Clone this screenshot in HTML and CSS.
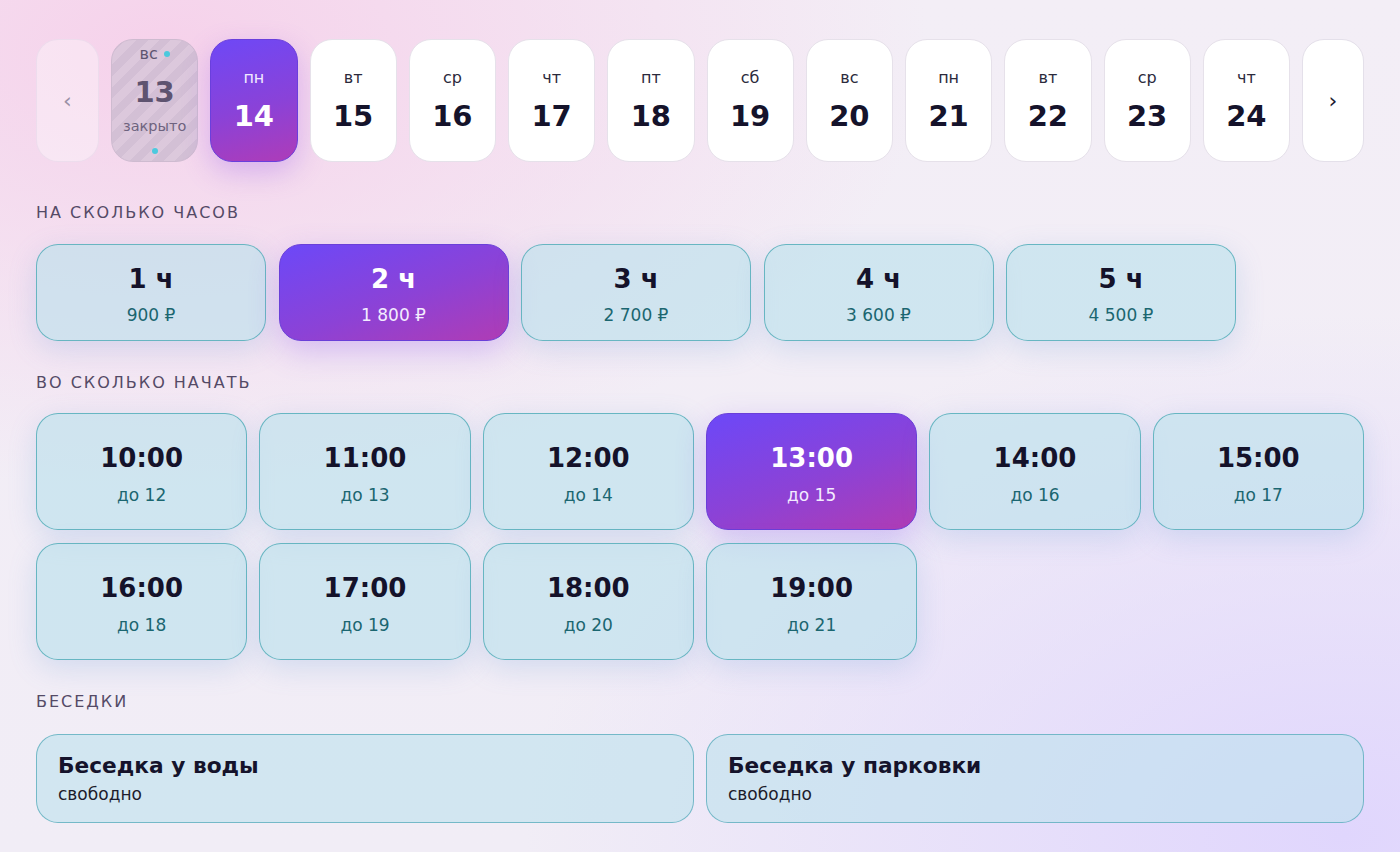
FILE: index.html
```html
<!DOCTYPE html>
<html lang="ru">
<head>
<meta charset="utf-8">
<title>Бронирование</title>
<link rel="stylesheet" href="styles.css">
</head>
<body>
<main class="page">
  <div class="dates">
    <button class="nav nav-prev">‹</button>
    <div class="day day-closed">
      <span class="dow-row"><span class="dow">вс</span><span class="dot"></span></span>
      <span class="num">13</span>
      <span class="closed-note">закрыто</span>
      <span class="dot dot-bottom"></span>
    </div>
    <div class="day day-active"><span class="dow">пн</span><span class="num">14</span></div>
    <div class="day"><span class="dow">вт</span><span class="num">15</span></div>
    <div class="day"><span class="dow">ср</span><span class="num">16</span></div>
    <div class="day"><span class="dow">чт</span><span class="num">17</span></div>
    <div class="day"><span class="dow">пт</span><span class="num">18</span></div>
    <div class="day"><span class="dow">сб</span><span class="num">19</span></div>
    <div class="day"><span class="dow">вс</span><span class="num">20</span></div>
    <div class="day"><span class="dow">пн</span><span class="num">21</span></div>
    <div class="day"><span class="dow">вт</span><span class="num">22</span></div>
    <div class="day"><span class="dow">ср</span><span class="num">23</span></div>
    <div class="day"><span class="dow">чт</span><span class="num">24</span></div>
    <button class="nav nav-next">›</button>
  </div>

  <h2 class="label label-hours">НА СКОЛЬКО ЧАСОВ</h2>
  <div class="hours">
    <div class="opt"><span class="opt-title">1 ч</span><span class="opt-sub">900 ₽</span></div>
    <div class="opt opt-active"><span class="opt-title">2 ч</span><span class="opt-sub">1 800 ₽</span></div>
    <div class="opt"><span class="opt-title">3 ч</span><span class="opt-sub">2 700 ₽</span></div>
    <div class="opt"><span class="opt-title">4 ч</span><span class="opt-sub">3 600 ₽</span></div>
    <div class="opt"><span class="opt-title">5 ч</span><span class="opt-sub">4 500 ₽</span></div>
  </div>

  <h2 class="label label-times">ВО СКОЛЬКО НАЧАТЬ</h2>
  <div class="times">
    <div class="opt opt-time"><span class="opt-title">10:00</span><span class="opt-sub">до 12</span></div>
    <div class="opt opt-time"><span class="opt-title">11:00</span><span class="opt-sub">до 13</span></div>
    <div class="opt opt-time"><span class="opt-title">12:00</span><span class="opt-sub">до 14</span></div>
    <div class="opt opt-time opt-active"><span class="opt-title">13:00</span><span class="opt-sub">до 15</span></div>
    <div class="opt opt-time"><span class="opt-title">14:00</span><span class="opt-sub">до 16</span></div>
    <div class="opt opt-time"><span class="opt-title">15:00</span><span class="opt-sub">до 17</span></div>
    <div class="opt opt-time"><span class="opt-title">16:00</span><span class="opt-sub">до 18</span></div>
    <div class="opt opt-time"><span class="opt-title">17:00</span><span class="opt-sub">до 19</span></div>
    <div class="opt opt-time"><span class="opt-title">18:00</span><span class="opt-sub">до 20</span></div>
    <div class="opt opt-time"><span class="opt-title">19:00</span><span class="opt-sub">до 21</span></div>
  </div>

  <h2 class="label label-gaz">БЕСЕДКИ</h2>
  <div class="gazebos">
    <div class="gazebo"><span class="gz-title">Беседка у воды</span><span class="gz-sub">свободно</span></div>
    <div class="gazebo"><span class="gz-title">Беседка у парковки</span><span class="gz-sub">свободно</span></div>
  </div>
</main>
</body>
</html>
```

FILE: styles.css
```css
* { box-sizing: border-box; }
html, body { margin: 0; height: 100%; }
body {
  font-family: "DejaVu Sans", "Liberation Sans", sans-serif;
  color: #15132b;
  background:
    radial-gradient(ellipse 760px 440px at 12% 6%, rgba(246, 208, 234, 0.95), rgba(246, 208, 234, 0) 100%),
    radial-gradient(ellipse 820px 520px at 96% 98%, rgba(224, 214, 253, 1), rgba(224, 214, 253, 0) 100%),
    linear-gradient(180deg, #f3eef6 0%, #f1edf6 100%);
  overflow: hidden;
}
.page { padding: 39px 36px 0; }

.dates {
  display: grid;
  grid-template-columns: 63px repeat(12, 1fr) 62px;
  gap: 12px;
  height: 123px;
}
.nav {
  border-radius: 22px;
  font-family: inherit;
  font-size: 22px;
  padding: 0;
  display: flex; align-items: center; justify-content: center;
}
.nav-prev {
  background: rgba(255, 255, 255, 0.35);
  border: 1px solid rgba(232, 216, 234, 0.7);
  color: #9a90a6;
}
.nav-next {
  background: #ffffff;
  border: 1px solid #e4e0ea;
  color: #1d1b30;
}
.day {
  position: relative;
  background: #ffffff;
  border: 1px solid #e6e1ea;
  border-radius: 22px;
  display: flex; flex-direction: column; align-items: center; justify-content: center;
  gap: 12px;
}
.dow { font-size: 16px; line-height: 19px; color: #2b2a3c; }
.num { font-size: 29px; line-height: 35px; font-weight: 700; color: #15132b; }
.day-active {
  background: linear-gradient(165deg, #6e48f6 0%, #8a42d8 55%, #ae3cb8 100%);
  border-color: #6a3fdc;
  box-shadow: 0 10px 28px rgba(150, 90, 235, 0.32);
}
.day-active .dow { color: #f1eaff; }
.day-active .num { color: #ffffff; }
.day-closed {
  background: repeating-linear-gradient(-45deg, #d9c7da 0 8px, #cfbdd2 8px 16px);
  border-color: #c9b8cd;
  opacity: 0.88;
  gap: 0;
  justify-content: flex-start;
  padding-top: 4px;
}
.dow-row { display: flex; align-items: center; gap: 6px; }
.day-closed .dow { color: #4a4560; }
.day-closed .num { color: #4a4260; margin-top: 12px; }
.day-closed .closed-note { font-size: 14.5px; line-height: 19px; color: #5c5470; margin-top: 7px; }
.dot {
  width: 6px; height: 6px; border-radius: 50%;
  background: #35c8dc;
  flex: none;
}
.dot-bottom { margin-top: 12px; }

.label {
  margin: 41px 0 0;
  font-size: 16px;
  line-height: 19px;
  font-weight: 400;
  letter-spacing: 2px;
  color: #544a66;
}

.hours {
  margin-top: 22px;
  display: grid;
  grid-template-columns: repeat(5, 230px);
  gap: 12.5px;
}
.opt {
  height: 97px;
  border-radius: 22px;
  background: rgba(186, 224, 236, 0.62);
  border: 1px solid rgba(78, 170, 182, 0.8);
  box-shadow: 0 8px 28px rgba(100, 150, 215, 0.22);
  display: flex; flex-direction: column; align-items: center; justify-content: center;
  gap: 11px;
  padding-top: 4px;
}
.opt-title { font-size: 26px; line-height: 30px; font-weight: 700; color: #14122a; }
.opt-sub { font-size: 17px; line-height: 20px; color: #1b6670; }
.opt-active {
  background: linear-gradient(160deg, #6c48f8 0%, #8c42d6 55%, #b03cb4 100%);
  border-color: #6a3fd8;
  box-shadow: 0 10px 30px rgba(140, 90, 240, 0.3);
}
.opt-active .opt-title { color: #ffffff; }
.opt-active .opt-sub { color: #f3ecff; }

.label-times { margin-top: 32px; }
.times {
  margin-top: 21px;
  display: grid;
  grid-template-columns: repeat(6, 1fr);
  gap: 13px 12px;
}
.opt-time { height: 117px; gap: 12px; }

.label-gaz { margin-top: 32px; }
.gazebos {
  margin-top: 23px;
  display: grid;
  grid-template-columns: 1fr 1fr;
  gap: 12px;
}
.gazebo {
  height: 89px;
  border-radius: 22px;
  background: rgba(190, 226, 238, 0.62);
  border: 1px solid rgba(86, 170, 186, 0.75);
  padding: 0 21px;
  display: flex; flex-direction: column; justify-content: center;
  gap: 6px;
}
.gz-title { font-size: 21.7px; line-height: 25px; font-weight: 700; color: #15132b; }
.gz-sub { font-size: 17px; line-height: 20px; color: #1d1c2c; }
```
